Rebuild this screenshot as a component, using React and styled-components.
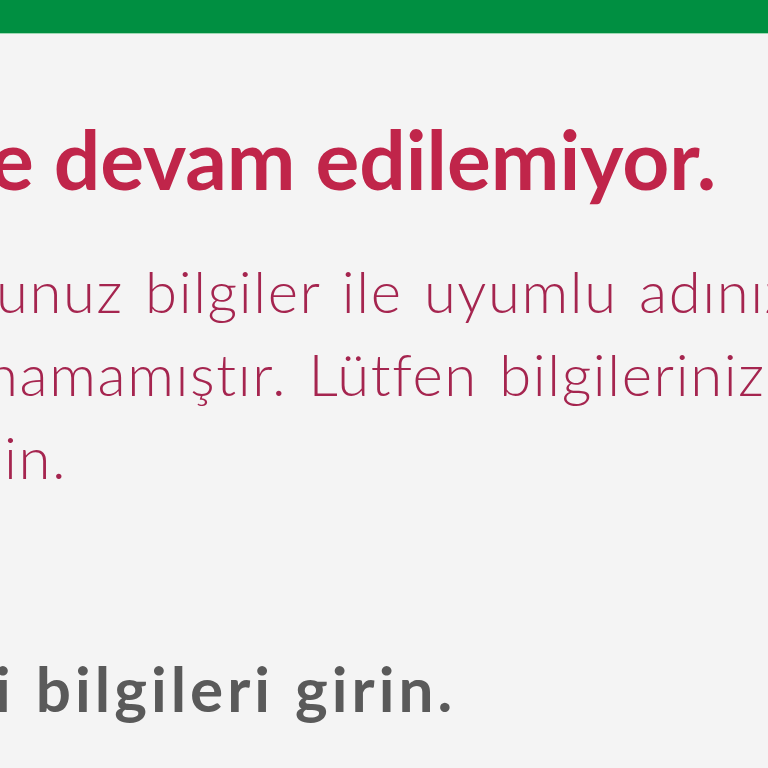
import styled, { createGlobalStyle } from 'styled-components'

const Global = createGlobalStyle`
  html, body { margin: 0; padding: 0; background: #f4f4f4; }
  body { font-family: Lato, "Noto Sans", sans-serif; }
`

const Page = styled.div`
  width: 768px;
  height: 768px;
  overflow: hidden;
  background: #f4f4f4;
  display: flex;
  flex-direction: column;
`

const TopBar = styled.header`
  height: 33px;
  flex-shrink: 0;
  background: #008f41;
  border-bottom: 1px solid #9fd9b4;
`

const Main = styled.main`
  padding-top: 75px;
  display: flex;
  flex-direction: column;
`

const ErrorBox = styled.section`
  display: flex;
  flex-direction: column;
  gap: 42px;
`

const ErrorTitle = styled.h1`
  margin: 0 0 0 ${(p) => p.$shift}px;
  font-family: Lato, sans-serif;
  font-weight: 700;
  font-size: 82px;
  line-height: 1.2;
  color: #c0254a;
  white-space: nowrap;
`

const ErrorText = styled.p`
  margin: 0;
  font-family: Lato, sans-serif;
  font-weight: 300;
  font-size: 58px;
  line-height: 83px;
  letter-spacing: 1.6px;
  word-spacing: 4px;
  color: #a5254f;
  white-space: nowrap;
`

const Line = styled.span`
  display: block;
  margin-left: ${(p) => p.$shift}px;
`

const SectionTitle = styled.h2`
  margin: 153px 0 0 ${(p) => p.$shift}px;
  font-family: Lato, sans-serif;
  font-weight: 700;
  font-size: 62px;
  line-height: 1.2;
  letter-spacing: 4px;
  word-spacing: 2px;
  color: #5a5a5a;
  white-space: nowrap;
`

export default function App() {
  return (
    <Page>
      <Global />
      <TopBar />
      <Main>
        <ErrorBox>
          <ErrorTitle $shift={-10}>e devam edilemiyor.</ErrorTitle>
          <ErrorText>
            <Line $shift={-4}>unuz bilgiler ile uyumlu adınıza</Line>
            <Line $shift={-14}>namamıştır. Lütfen bilgilerinizi</Line>
            <Line $shift={4}>in.</Line>
          </ErrorText>
        </ErrorBox>
        <SectionTitle $shift={-5}>i bilgileri girin.</SectionTitle>
      </Main>
    </Page>
  )
}
